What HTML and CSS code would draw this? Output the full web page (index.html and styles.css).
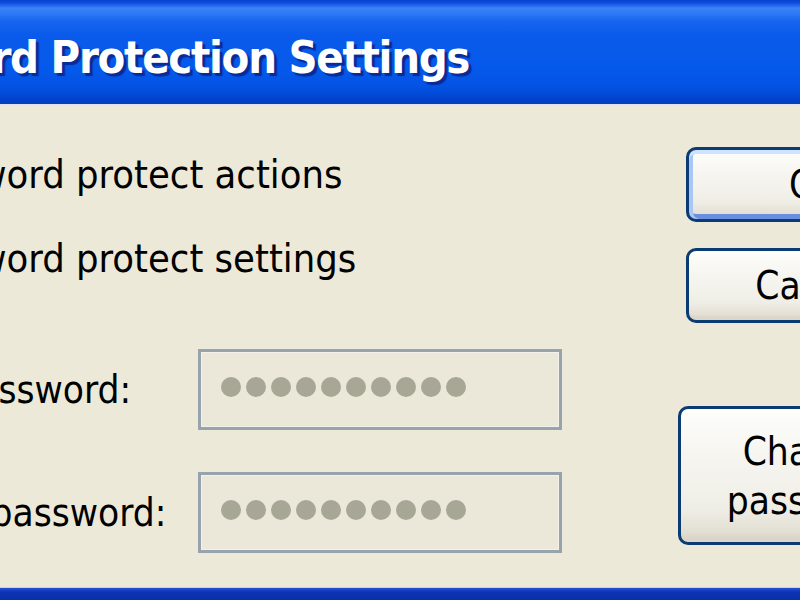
FILE: index.html
```html
<!DOCTYPE html>
<html lang="en">
<head>
<meta charset="utf-8">
<title>Password Protection Settings</title>
<link rel="stylesheet" href="styles.css">
</head>
<body>
<div class="window">
  <div class="titlebar">
    <span class="title">Password Protection Settings</span>
  </div>
  <div class="titleline"></div>
  <div class="content">
    <div class="form">
      <div class="check-row row-actions">
        <span class="checkbox"></span>
        <span class="check-label">Password protect actions</span>
      </div>
      <div class="check-row row-settings">
        <span class="checkbox"></span>
        <span class="check-label">Password protect settings</span>
      </div>
      <div class="field-row field-first">
        <span class="field-label"><span class="lbl-pw">Password:</span></span>
        <div class="pwbox"><span class="dot"></span><span class="dot"></span><span class="dot"></span><span class="dot"></span><span class="dot"></span><span class="dot"></span><span class="dot"></span><span class="dot"></span><span class="dot"></span><span class="dot"></span></div>
      </div>
      <div class="field-row field-second">
        <span class="field-label"><span class="lbl-confirm">Confirm password:</span></span>
        <div class="pwbox"><span class="dot"></span><span class="dot"></span><span class="dot"></span><span class="dot"></span><span class="dot"></span><span class="dot"></span><span class="dot"></span><span class="dot"></span><span class="dot"></span><span class="dot"></span></div>
      </div>
    </div>
    <div class="buttons">
      <button class="btn btn-default btn-ok">OK</button>
      <button class="btn btn-cancel">Cancel</button>
      <button class="btn btn-change">Change<br>password</button>
    </div>
  </div>
  <div class="bottomline"></div>
  <div class="bottomframe"></div>
</div>
</body>
</html>
```
FILE: styles.css
```css
html, body {
  margin: 0;
  padding: 0;
}
body {
  width: 800px;
  height: 600px;
  overflow: hidden;
  background: #ece9d8;
  font-family: "DejaVu Sans Condensed", "DejaVu Sans", sans-serif;
  font-size: 38.5px;
  color: #000;
}
.window {
  display: flex;
  flex-direction: column;
  height: 600px;
}
.titlebar {
  height: 104px;
  flex: none;
  background: linear-gradient(to bottom,
    #0a40cf 0px, #0d4fe0 3px, #3a82f8 8px, #2f7af6 13px, #1664ef 22px,
    #0a5beb 35px, #0559ea 70px, #0453e4 86px, #024ad8 94px, #0240c8 101px, #0a3cbc 104px);
  display: flex;
  align-items: flex-start;
  overflow: hidden;
  white-space: nowrap;
}
.title {
  margin-left: -170px;
  margin-top: 28px;
  font-family: "DejaVu Sans Condensed", "DejaVu Sans", sans-serif;
  font-weight: bold;
  font-size: 45px;
  letter-spacing: -1.3px;
  color: #fff;
  text-shadow: 3px 3px 1px #0a2a98;
  line-height: 60px;
}
.titleline {
  height: 2px;
  flex: none;
  background: #dfe3f2;
}
.content {
  flex: 1;
  display: flex;
  min-height: 0;
}
.form {
  width: 678px;
  flex: none;
  padding-top: 46px;
  display: flex;
  flex-direction: column;
}
.check-row {
  display: flex;
  align-items: center;
  height: 44px;
  line-height: 44px;
  font-size: 39.5px;
  white-space: nowrap;
  margin-left: -155px;
}
.row-settings {
  margin-top: 40px;
}
.checkbox {
  width: 28px;
  height: 28px;
  border: 3px solid #1c5180;
  background: #f4f3ee;
  margin-right: 20px;
  flex: none;
}
.field-row {
  display: flex;
  align-items: center;
  height: 81px;
  white-space: nowrap;
}
.field-first {
  margin-top: 69px;
}
.field-second {
  margin-top: 42px;
}
.field-label {
  width: 198px;
  flex: none;
  line-height: 44px;
  overflow: visible;
}
.lbl-pw {
  margin-left: -42px;
}
.lbl-confirm {
  margin-left: -157px;
}
.pwbox {
  box-sizing: border-box;
  width: 364px;
  height: 81px;
  border: 3px solid #97a3ad;
  box-shadow: inset 0 0 0 1px #f3f2ea;
  background: #ebe8d9;
  display: flex;
  align-items: center;
  gap: 5px;
  padding: 0 0 6px 20px;
}
.dot {
  width: 20px;
  height: 20px;
  border-radius: 50%;
  background: #a8a796;
  flex: none;
}
.buttons {
  flex: 1;
  display: flex;
  flex-direction: column;
  align-items: flex-start;
  padding-top: 41px;
}
.btn {
  box-sizing: border-box;
  font-family: inherit;
  font-size: 38.5px;
  color: #000;
  border: 3px solid #0b3b73;
  border-radius: 10px;
  background: linear-gradient(to bottom, #fdfdfb 0%, #f5f4ef 40%, #efeee6 75%, #e3dfd3 92%, #d6d0c3 100%);
  box-shadow: inset 0 -3px 0 #dcd6c8, inset 0 3px 0 #ffffff;
  padding: 0;
  flex: none;
}
.btn-ok, .btn-cancel {
  width: 256px;
  height: 75px;
  margin-left: 8px;
  line-height: 60px;
}
.btn-default {
  box-shadow: inset 0 4px 0 #cfe3fd, inset 4px 0 0 #a9c6f5, inset -4px 0 0 #a9c6f5, inset 0 -5px 0 #6a8fe0;
}
.btn-cancel {
  margin-top: 26px;
}
.btn-change {
  width: 262px;
  height: 139px;
  margin-top: 83px;
  line-height: 49px;
}
.bottomline {
  height: 1px;
  flex: none;
  background: #c6cef0;
}
.bottomframe {
  height: 12px;
  flex: none;
  background: linear-gradient(to bottom, #2a50d4 0px, #0c34b4 4px, #0a2fa8 12px);
}
```
